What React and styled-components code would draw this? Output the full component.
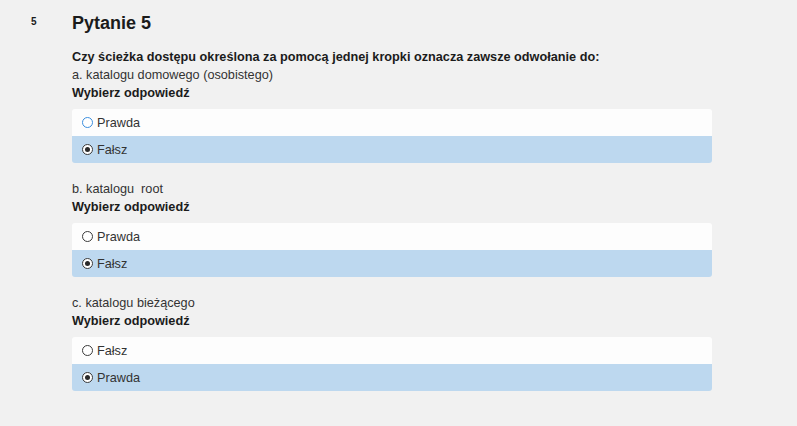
import React from 'react';
import styled, { createGlobalStyle } from 'styled-components';

const GlobalStyle = createGlobalStyle`
  body {
    margin: 0;
    background: #f1f1f1;
    font-family: "Liberation Sans", Arial, sans-serif;
    color: #1b1b1b;
  }
`;

const Page = styled.div`
  display: flex;
  padding: 12px 0 20px 31px;
`;

const Num = styled.div`
  width: 41px;
  flex-shrink: 0;
  font-size: 10px;
  font-weight: bold;
  line-height: 20px;
`;

const Main = styled.div`
  width: 640px;
`;

const Title = styled.h2`
  margin: 0 0 14px;
  font-size: 18px;
  line-height: 22px;
  font-weight: bold;
`;

const Question = styled.div`
  font-size: 12.7px;
  line-height: 18px;
  font-weight: bold;
`;

const Part = styled.div`
  margin-top: ${({ first }) => (first ? '0' : '17px')};
`;

const PartText = styled.div`
  font-size: 12.7px;
  line-height: 18px;
  color: #333;
  white-space: pre;
`;

const Label = styled.div`
  font-size: 12.7px;
  line-height: 18px;
  font-weight: bold;
`;

const Options = styled.div`
  margin-top: 7px;
  border-radius: 3px;
  overflow: hidden;
`;

const Option = styled.label`
  display: flex;
  align-items: center;
  gap: 4px;
  height: 27px;
  padding-left: 10px;
  font-size: 12.7px;
  color: #333;
  background: ${({ checked }) => (checked ? '#bdd8ef' : '#fdfdfd')};
`;

const Radio = styled.span`
  box-sizing: border-box;
  width: 11px;
  height: 11px;
  border-radius: 50%;
  border: 1px solid ${({ focus }) => (focus ? '#3b8ede' : '#3a3a3a')};
  background: #fff;
  display: flex;
  align-items: center;
  justify-content: center;

  &::after {
    content: '';
    display: ${({ checked }) => (checked ? 'block' : 'none')};
    width: 5px;
    height: 5px;
    border-radius: 50%;
    background: #2a2a2a;
  }
`;

const parts = [
  { text: 'a. katalogu domowego (osobistego)', options: [['Prawda', false], ['Fałsz', true]], focus: true },
  { text: 'b. katalogu  root', options: [['Prawda', false], ['Fałsz', true]] },
  { text: 'c. katalogu bieżącego', options: [['Fałsz', false], ['Prawda', true]] },
];

export default function App() {
  return (
    <>
      <GlobalStyle />
      <Page>
        <Num>5</Num>
        <Main>
          <Title>Pytanie 5</Title>
          <Question>Czy ścieżka dostępu określona za pomocą jednej kropki oznacza zawsze odwołanie do:</Question>
          {parts.map((p, i) => (
            <Part key={i} first={i === 0}>
              <PartText>{p.text}</PartText>
              <Label>Wybierz odpowiedź</Label>
              <Options>
                {p.options.map(([name, checked], j) => (
                  <Option key={j} checked={checked}>
                    <Radio checked={checked} focus={p.focus && j === 0} />
                    {name}
                  </Option>
                ))}
              </Options>
            </Part>
          ))}
        </Main>
      </Page>
    </>
  );
}
